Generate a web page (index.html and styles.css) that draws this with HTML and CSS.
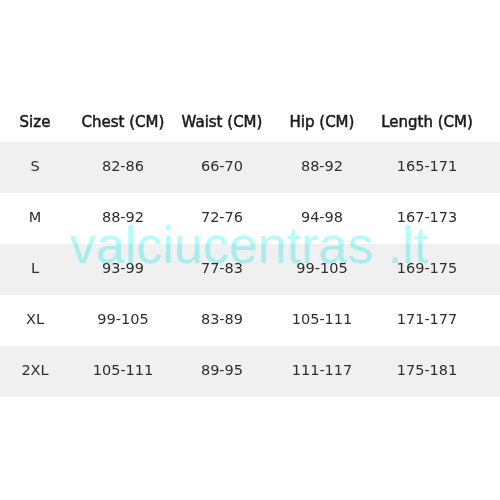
FILE: index.html
```html
<!DOCTYPE html>
<html>
<head>
<meta charset="utf-8">
<link rel="stylesheet" href="styles.css">
</head>
<body>
<div class="page">
  <div class="table">
    <div class="row head">
      <div class="c">Size</div><div class="c">Chest (CM)</div><div class="c">Waist (CM)</div><div class="c">Hip (CM)</div><div class="c">Length (CM)</div>
    </div>
    <div class="row alt">
      <div class="c">S</div><div class="c">82-86</div><div class="c">66-70</div><div class="c">88-92</div><div class="c">165-171</div>
    </div>
    <div class="row">
      <div class="c">M</div><div class="c">88-92</div><div class="c">72-76</div><div class="c">94-98</div><div class="c">167-173</div>
    </div>
    <div class="row alt">
      <div class="c">L</div><div class="c">93-99</div><div class="c">77-83</div><div class="c">99-105</div><div class="c">169-175</div>
    </div>
    <div class="row">
      <div class="c">XL</div><div class="c">99-105</div><div class="c">83-89</div><div class="c">105-111</div><div class="c">171-177</div>
    </div>
    <div class="row alt">
      <div class="c">2XL</div><div class="c">105-111</div><div class="c">89-95</div><div class="c">111-117</div><div class="c">175-181</div>
    </div>
  </div>
  <div class="watermark">valciucentras .lt</div>
</div>
</body>
</html>
```

FILE: styles.css
```css
html, body {
  margin: 0;
  padding: 0;
  background: #ffffff;
}
.page {
  position: relative;
  width: 500px;
  height: 500px;
  padding-top: 101px;
  box-sizing: border-box;
}
.table {
  display: flex;
  flex-direction: column;
  font-family: "DejaVu Sans", sans-serif;
  color: #2e2e2e;
}
.row {
  display: grid;
  grid-template-columns: 70px 106px 92px 108px 102px;
  height: 51px;
  padding-bottom: 4px;
  box-sizing: border-box;
  align-items: center;
  font-size: 14.5px;
}
.row.head {
  height: 41px;
  padding-bottom: 0;
  color: #1a1a1a;
  font-size: 15px;
  -webkit-text-stroke: 0.5px #1a1a1a;
}
.row.alt {
  background: #f0f0f0;
}
.c {
  text-align: center;
  white-space: nowrap;
}
.watermark {
  position: absolute;
  left: 70px;
  top: 215px;
  font-family: "Liberation Sans", Arial, sans-serif;
  font-size: 52px;
  line-height: 60px;
  color: #b4fbfb;
  mix-blend-mode: multiply;
  white-space: nowrap;
}
```
